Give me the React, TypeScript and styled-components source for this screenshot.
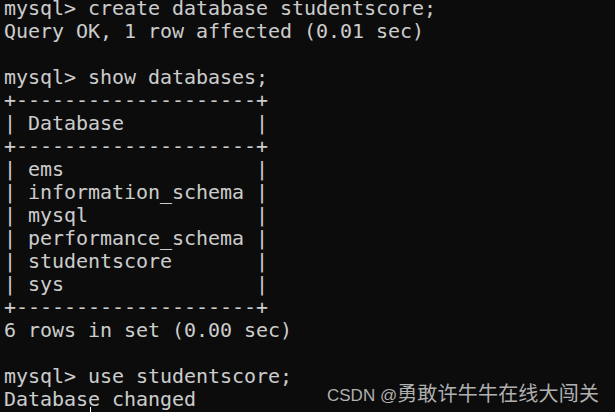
import React from "react";
import styled, { createGlobalStyle } from "styled-components";

const Global = createGlobalStyle`
  html, body { margin: 0; padding: 0; background: #0c0c0c; }
  #root { width: 615px; height: 412px; }
`;

const Screen = styled.div`
  position: relative;
  width: 615px;
  height: 412px;
  overflow: hidden;
  background: #0c0c0c;
`;

const Terminal = styled.div`
  display: flex;
  flex-direction: column;
  margin-top: -3px;
  padding-left: 4px;
  font-family: "DejaVu Sans Mono", "Liberation Mono", monospace;
  font-size: 20px;
  letter-spacing: -0.04px;
  color: #cccccc;
`;

const Line = styled.div`
  height: 23px;
  line-height: 23px;
  white-space: pre;
`;

const Watermark = styled.div`
  position: absolute;
  left: 327px;
  top: 378px;
  display: flex;
  align-items: baseline;
  color: #b0b0b0;
  white-space: pre;
`;

const Latin = styled.span`
  font-family: "Liberation Sans", Arial, sans-serif;
  font-size: 17px;
`;

const Cjk = styled.span`
  font-family: "Noto Sans CJK SC", sans-serif;
  font-size: 20px;
  letter-spacing: 0.2px;
`;

const Cursor = styled.div`
  position: absolute;
  left: 90px;
  top: 407px;
  width: 1px;
  height: 5px;
  background: #ffffff;
`;

const lines = [
  "mysql> create database studentscore;",
  "Query OK, 1 row affected (0.01 sec)",
  "",
  "mysql> show databases;",
  "+--------------------+",
  "| Database           |",
  "+--------------------+",
  "| ems                |",
  "| information_schema |",
  "| mysql              |",
  "| performance_schema |",
  "| studentscore       |",
  "| sys                |",
  "+--------------------+",
  "6 rows in set (0.00 sec)",
  "",
  "mysql> use studentscore;",
  "Database changed",
];

export default function App() {
  return (
    <Screen>
      <Global />
      <Terminal>
        {lines.map((l, i) => (
          <Line key={i}>{l}</Line>
        ))}
      </Terminal>
      <Watermark>
        <Latin>CSDN @</Latin>
        <Cjk>勇敢许牛牛在线大闯关</Cjk>
      </Watermark>
      <Cursor />
    </Screen>
  );
}
